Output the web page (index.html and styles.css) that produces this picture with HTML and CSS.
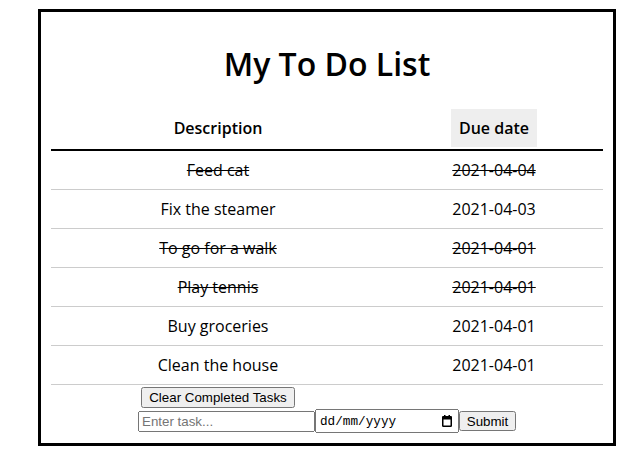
FILE: index.html
```html
<!DOCTYPE html>
<html lang="en-GB">
<head>
<meta charset="utf-8">
<title>My To Do List</title>
<link rel="stylesheet" href="styles.css">
</head>
<body>
<div class="card">
  <h1 class="title">My To Do List</h1>
  <table class="todo">
    <thead>
      <tr>
        <th class="col-desc"><span class="head">Description</span></th>
        <th class="col-date"><span class="head sorted">Due date</span></th>
      </tr>
    </thead>
    <tbody>
      <tr class="done"><td>Feed cat</td><td>2021-04-04</td></tr>
      <tr><td>Fix the steamer</td><td>2021-04-03</td></tr>
      <tr class="done"><td>To go for a walk</td><td>2021-04-01</td></tr>
      <tr class="done"><td>Play tennis</td><td>2021-04-01</td></tr>
      <tr><td>Buy groceries</td><td>2021-04-01</td></tr>
      <tr><td>Clean the house</td><td>2021-04-01</td></tr>
    </tbody>
  </table>
  <div class="actions">
    <div class="clear-cell"><button type="button" class="btn">Clear Completed Tasks</button></div>
  </div>
  <form class="add"><input type="text" class="task-input" placeholder="Enter task..."><span class="date-field"><input type="text" class="date-input" placeholder="dd/mm/yyyy" inputmode="numeric" aria-label="Due date"><svg class="cal-icon" width="10" height="12" viewBox="0 0 10 12" aria-hidden="true"><rect x="0.75" y="1.75" width="8.5" height="9.5" rx="0.6" fill="none" stroke="#000" stroke-width="1.5"/><rect x="0.5" y="1.5" width="9" height="3" fill="#000"/><rect x="2" y="0" width="1.5" height="2" fill="#000"/><rect x="6.5" y="0" width="1.5" height="2" fill="#000"/></svg></span><button type="submit" class="btn submit">Submit</button></form>
</div>
</body>
</html>
```

FILE: styles.css
```css
html, body {
  margin: 0;
  padding: 0;
  background: #fff;
}

body {
  font-family: "Open Sans", "Noto Sans", sans-serif;
  color: #000;
}

.card {
  box-sizing: border-box;
  width: 578px;
  margin: 9px 0 0 38px;
  border: 3px solid #000;
  padding: 0 10px 10px 10px;
}

.title {
  margin: 30px 0 23px 0;
  font-size: 32px;
  font-weight: 600;
  line-height: 44px;
  text-align: center;
}

.todo {
  width: 552px;
  border-collapse: collapse;
  font-size: 16px;
}

.todo th {
  padding: 0 0 2px 0;
  font-weight: 600;
  border-bottom: 2px solid #000;
  text-align: center;
  line-height: 22px;
}

.col-desc {
  width: 334px;
}

.head {
  display: inline-block;
  padding: 8px;
}

.sorted {
  background: #eeeeee;
}

.todo td {
  padding: 8px 0;
  line-height: 22px;
  text-align: center;
  border-bottom: 1px solid #cccccc;
}

.todo tr.done td {
  text-decoration: line-through;
}

.actions {
  display: flex;
  margin-top: 2px;
}

.clear-cell {
  width: 334px;
  display: flex;
  justify-content: center;
}

.btn {
  font-family: "Liberation Sans", Arial, sans-serif;
  font-size: 13.333px;
}

.add {
  display: flex;
  justify-content: center;
  align-items: center;
  margin: 1px 0 0 0;
}

.task-input {
  box-sizing: border-box;
  width: 177px;
  height: 21px;
  font-family: "Liberation Sans", Arial, sans-serif;
  font-size: 13.333px;
}

.date-field {
  position: relative;
  display: inline-flex;
}

.date-input {
  box-sizing: border-box;
  width: 144px;
  height: 24px;
  padding: 1px 22px 1px 3px;
  font-family: "Liberation Mono", "DejaVu Sans Mono", monospace;
  font-size: 12.7px;
  color: #000;
}

.date-input::placeholder {
  color: #000;
  opacity: 1;
}

.cal-icon {
  position: absolute;
  right: 7px;
  top: 6px;
  pointer-events: none;
}

.submit {
  box-sizing: border-box;
  width: 57px;
  height: 20px;
  padding: 0 4px;
}
```
